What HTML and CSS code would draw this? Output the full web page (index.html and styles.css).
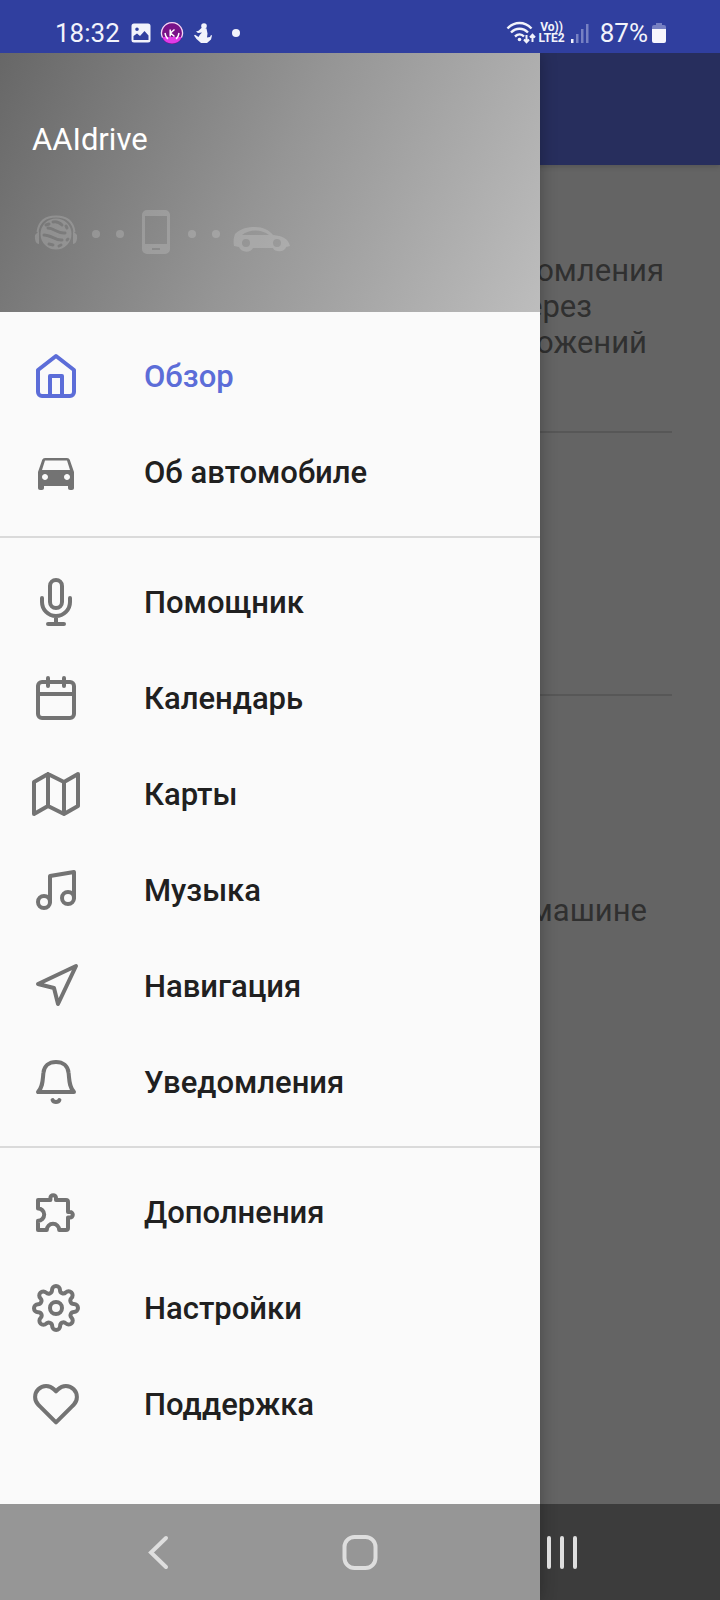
FILE: index.html
```html
<!DOCTYPE html>
<html lang="ru">
<head>
<meta charset="utf-8">
<meta name="viewport" content="width=device-width, initial-scale=1">
<title>AAIdrive</title>
<link rel="stylesheet" href="styles.css">
</head>
<body>
<div class="screen">
  <header class="status">
    <div class="status-group status-left">
      <span class="status-text clock">18:32</span>
      <svg width="20" height="20" viewBox="0 0 20 20"><path fill="#f2f3fb" fill-rule="evenodd" d="M3 .5h14A2.500 2.500 0 0 1 19.500 3v14a2.500 2.500 0 0 1-2.500 2.500H3A2.500 2.500 0 0 1 .5 17V3A2.500 2.500 0 0 1 3 .5zM2.500 13v4h15v-4.500L13.500 8l-4.500 5-3-2.500zM6 4.500a1.800 1.800 0 1 0 0 3.600 1.800 1.800 0 0 0 0-3.600z"/></svg>
      <svg width="24" height="24" viewBox="0 0 24 24"><circle cx="12" cy="12" r="11" fill="#7a1288"/><path d="M2 16h20a11 11 0 0 1-20 0z" fill="#e03be8"/><path d="M2.500 16.500a10.500 10.500 0 1 1 19 0" fill="none" stroke="#f3d9f7" stroke-width="1.300"/><path d="M5 12l.8 3 2 3M19 12l-.8 3-2 3M10.200 8.500v7M14.500 8.500l-4 3.500 4 3.500" fill="none" stroke="#fff" stroke-width="1.500"/></svg>
      <svg width="20" height="22" viewBox="0 0 20 22"><g fill="#f2f3fb"><circle cx="11" cy="4" r="2.800"/><path d="M9 5.500l4.500 1 1 5-.5 4 3-.5 1-2 1 .5-1 4-4 3.500H8L3.500 17 1 13.500l1-.8L5.500 15 7 12.500l2-2-4 .5-2-1.500 2.500-.7z"/></g></svg>
      <svg class="status-dot" width="8" height="8" viewBox="0 0 8 8"><circle cx="4" cy="4" r="4" fill="#f2f3fb"/></svg>
    </div>
    <div class="status-group status-right">
      <svg width="30" height="24" viewBox="0 0 30 24" fill="none" stroke="#f2f3fb" stroke-width="2.400"><path d="M1.500 7.500c7-7.300 17-7.300 24 0M5 11.500c5-5 12-5 17 0M9 15.500c3-2.800 6.500-2.800 9 0"/><circle cx="13.500" cy="18.500" r="1.800" fill="#f2f3fb" stroke="none"/><path stroke-width="2" d="M20.500 14v7M18 18.500l2.500 2.800 2.500-2.800M26.500 21v-7M24 16.500l2.500-2.800 2.500 2.800"/></svg>
      <span class="lte"><span>Vo))</span><span>LTE2</span></span>
      <svg width="20" height="22" viewBox="0 0 20 22"><path d="M1 17h2.500v4H1z" fill="#f2f3fb"/><path d="M6 12h2.500v9H6zM11 7h2.500v14H11zM16 2h2.500v19H16z" fill="#7781c3"/></svg>
      <span class="status-text battery-text">87%</span>
      <svg width="14" height="22" viewBox="0 0 14 22"><path d="M4 3V1h6v2h2a2 2 0 0 1 2 2v3H0V5a2 2 0 0 1 2-2z" fill="#7781c3"/><path d="M0 7h14v12a2 2 0 0 1-2 2H2a2 2 0 0 1-2-2z" fill="#f6f6fd"/></svg>
    </div>
  </header>

  <div class="stage">
    <main class="page">
      <div class="toolbar"></div>
      <div class="content">
        <p class="copy copy-first"><span class="line">уведомления</span><span class="line line-short">через</span><span class="line line-mid">приложений</span></p>
        <p class="copy copy-blank"></p>
        <p class="copy copy-last"><span class="line line-mid">машине</span></p>
      </div>
    </main>

    <aside class="drawer">
      <div class="drawer-head">
        <h1 class="drawer-title">AAIdrive</h1>
        <div class="chain">
          <svg width="52" height="48" viewBox="0 0 52 48"><mask id="globe-cut"><rect width="52" height="48" fill="#fff"/><g fill="none" stroke="#000" stroke-width="3" stroke-linecap="round"><path d="M21 12c4-1 7 1 9 3M14 15l3-1M16 18c6 0 10 6 17 5M12 25c7 0 12 6 18 5M17 34l4 1M34 16l1 2M35 30l1-1M27 36l2-1"/></g></mask><circle cx="24" cy="24" r="15.500" mask="url(#globe-cut)"/><path class="chain-line" d="M5.500 22C7 11 14 6.500 24 6.500S41 11 42.500 22"/><path d="M3 25l4-4v13c-3 0-4.500-4-4-9zM45 25l-4-4v13c3 0 4.500-4 4-9z"/></svg>
          <svg width="48" height="48" viewBox="0 0 48 48"><circle cx="12" cy="24" r="4"/><circle cx="36" cy="24" r="4"/></svg>
          <svg width="48" height="48" viewBox="0 0 48 48"><path fill-rule="evenodd" d="M15 0h18a5 5 0 0 1 5 5v34a5 5 0 0 1-5 5H15a5 5 0 0 1-5-5V5a5 5 0 0 1 5-5zM13 6v28h22V6zM20 38v2h8v-2z"/></svg>
          <svg width="48" height="48" viewBox="0 0 48 48"><circle cx="12" cy="24" r="4"/><circle cx="36" cy="24" r="4"/></svg>
          <svg width="64" height="48" viewBox="0 0 64 48"><path fill-rule="evenodd" d="M7 24C13 18 20 17 27 17c8 0 14 3 18 8 9 1 15 3 17 11l-4 1c-1 5-11 6-13 1H25c-2 5-12 5-14-1l-5-1c-1-5 0-9 1-12zM14 25h27c-7-6-20-6-27 0zM18 29a4 4 0 1 0 0 8 4 4 0 0 0 0-8zM49 29a4 4 0 1 0 0 8 4 4 0 0 0 0-8z"/></svg>
        </div>
      </div>
      <nav>
        <ul class="menu">
          <li><a class="item item-active" href="#overview"><svg class="icon" viewBox="0 0 24 24"><path d="M3 9l9-7 9 7v11a2 2 0 0 1-2 2H5a2 2 0 0 1-2-2zM9 22V12h6v10"/></svg>Обзор</a></li>
          <li><a class="item" href="#car"><svg class="icon icon-solid" viewBox="0 0 24 24"><path d="M18.920 6.010C18.720 5.420 18.160 5 17.500 5h-11c-.66 0-1.210.42-1.420 1.010L3 12v8c0 .55.45 1 1 1h1c.55 0 1-.45 1-1v-1h12v1c0 .55.45 1 1 1h1c.55 0 1-.45 1-1v-8l-2.080-5.990zM6.500 16c-.83 0-1.500-.67-1.500-1.500S5.670 13 6.500 13s1.500.67 1.500 1.500S7.330 16 6.500 16zm11 0c-.83 0-1.500-.67-1.500-1.500s.67-1.500 1.500-1.500 1.500.67 1.500 1.500-.67 1.500-1.500 1.500zM5 11l1.500-4.800h11L19 11H5z"/></svg>Об автомобиле</a></li>
        </ul>
        <ul class="menu">
          <li><a class="item" href="#assistant"><svg class="icon" viewBox="0 0 24 24"><path d="M12 1a3 3 0 0 0-3 3v8a3 3 0 0 0 6 0V4a3 3 0 0 0-3-3zM19 10v2a7 7 0 0 1-14 0v-2M12 19v4M8 23h8"/></svg>Помощник</a></li>
          <li><a class="item" href="#calendar"><svg class="icon" viewBox="0 0 24 24"><rect x="3" y="4" width="18" height="18" rx="2"/><path d="M16 2v4M8 2v4M3 10h18"/></svg>Календарь</a></li>
          <li><a class="item" href="#maps"><svg class="icon" viewBox="0 0 24 24"><path d="M1 6v16l7-4 8 4 7-4V2l-7 4-8-4zM8 2v16M16 6v16"/></svg>Карты</a></li>
          <li><a class="item" href="#music"><svg class="icon" viewBox="0 0 24 24"><path d="M9 18V5l12-2v13"/><circle cx="6" cy="18" r="3"/><circle cx="18" cy="16" r="3"/></svg>Музыка</a></li>
          <li><a class="item" href="#navigation"><svg class="icon" viewBox="0 0 24 24"><path d="M3 11l19-9-9 19-2-8z"/></svg>Навигация</a></li>
          <li><a class="item" href="#notifications"><svg class="icon" viewBox="0 0 24 24"><path d="M3 17h18c-2.500-2.500-2.300-6-2.700-9.500C18 4 15.500 2 12 2S6 4 5.700 7.500C5.300 11 5.500 14.500 3 17zM10.300 21a1.800 1.500 0 0 0 3.400 0"/></svg>Уведомления</a></li>
        </ul>
        <ul class="menu">
          <li><a class="item" href="#addons"><svg class="icon" viewBox="0 0 24 24"><path d="M3 6h6.200V5a1.400 1.400 0 0 1 2.800 0v1H17a1 1 0 0 1 1 1v5h1a1.400 1.400 0 0 1 0 2.800h-1V20a1 1 0 0 1-1 1h-3.400a3.100 3.100 0 0 0-6.200 0H3v-4.600a3.100 3.100 0 0 0 0-6.200z"/></svg>Дополнения</a></li>
          <li><a class="item" href="#settings"><svg class="icon" viewBox="0 0 24 24"><circle cx="12" cy="12" r="3"/><path d="M19.400 15a1.650 1.650 0 0 0 .33 1.820l.06.06a2 2 0 0 1 0 2.830 2 2 0 0 1-2.830 0l-.06-.06a1.650 1.650 0 0 0-1.820-.33 1.650 1.650 0 0 0-1 1.510V21a2 2 0 0 1-2 2 2 2 0 0 1-2-2v-.09A1.650 1.650 0 0 0 9 19.400a1.650 1.650 0 0 0-1.820.33l-.06.06a2 2 0 0 1-2.830 0 2 2 0 0 1 0-2.830l.06-.06a1.650 1.650 0 0 0 .33-1.820 1.650 1.650 0 0 0-1.510-1H3a2 2 0 0 1-2-2 2 2 0 0 1 2-2h.09A1.650 1.650 0 0 0 4.600 9a1.650 1.650 0 0 0-.33-1.820l-.06-.06a2 2 0 0 1 0-2.830 2 2 0 0 1 2.830 0l.06.06a1.650 1.650 0 0 0 1.820.33H9a1.650 1.650 0 0 0 1-1.510V3a2 2 0 0 1 2-2 2 2 0 0 1 2 2v.09a1.650 1.650 0 0 0 1 1.510 1.650 1.650 0 0 0 1.820-.33l.06-.06a2 2 0 0 1 2.830 0 2 2 0 0 1 0 2.830l-.06.06a1.650 1.650 0 0 0-.33 1.820V9a1.650 1.650 0 0 0 1.510 1H21a2 2 0 0 1 2 2 2 2 0 0 1-2 2h-.09a1.650 1.650 0 0 0-1.510 1z"/></svg>Настройки</a></li>
          <li><a class="item" href="#support"><svg class="icon" viewBox="0 0 24 24"><path d="M20.840 4.610a5.500 5.500 0 0 0-7.780 0L12 5.670l-1.060-1.060a5.500 5.500 0 0 0-7.780 7.780l1.060 1.060L12 21.230l7.780-7.780 1.060-1.060a5.500 5.500 0 0 0 0-7.780z"/></svg>Поддержка</a></li>
        </ul>
      </nav>
    </aside>
  </div>

  <footer class="sysnav">
    <button class="sysbtn" type="button" aria-label="Назад"><svg width="40" height="40" viewBox="0 0 40 40"><path d="M28 6L13 20.500 28 35"/></svg></button>
    <button class="sysbtn" type="button" aria-label="Домой"><svg width="40" height="40" viewBox="0 0 40 40"><rect x="4.500" y="5" width="31" height="31" rx="10"/></svg></button>
    <button class="sysbtn" type="button" aria-label="Недавние"><svg width="40" height="40" viewBox="0 0 40 40"><path d="M7 6v29M20 6v29M33 6v29"/></svg></button>
  </footer>
</div>
</body>
</html>
```
FILE: styles.css
```css
* {
  box-sizing: border-box;
}

body {
  margin: 0;
  background: #646464;
  font-family: Roboto, "Noto Sans", sans-serif;
}

svg {
  display: block;
  flex: none;
}

.screen {
  position: relative;
  display: flex;
  flex-direction: column;
  min-height: 100vh;
}

.status {
  display: flex;
  justify-content: space-between;
  height: 53px;
  padding: 13px 54px 0 55px;
  background: #303f9f;
  color: #f2f3fb;
}

.status-group {
  display: flex;
  align-items: center;
  height: 40px;
}

.status-left {
  gap: 9px;
}

.status-right {
  gap: 2px;
}

.status-text {
  font-size: 26px;
  line-height: 32px;
}

.clock {
  margin-right: 2px;
}

.status-dot {
  margin-left: 10px;
}

.lte {
  display: flex;
  flex-direction: column;
  align-items: center;
  margin-right: 3px;
  font-size: 12px;
  font-weight: 700;
  line-height: 11px;
}

.battery-text {
  margin: 0 2px 0 8px;
}

.stage {
  position: relative;
  flex: 1;
  display: flex;
  overflow: hidden;
}

.page {
  flex: 1;
  background: #646464;
}

.toolbar {
  height: 112px;
  background: #272e5d;
  box-shadow: 0 2px 5px rgba(0, 0, 0, 0.15);
}

.content {
  padding: 88px 48px 0;
}

.copy {
  display: flex;
  flex-direction: column;
  align-items: flex-end;
  margin: 0;
  color: #303030;
  font-size: 31px;
  line-height: 36px;
}

.copy-first {
  height: 180px;
  border-bottom: 2px solid #575757;
}

.copy-blank {
  height: 263px;
  border-bottom: 2px solid #575757;
}

.copy-last {
  padding-top: 197px;
}

.line {
  margin-right: 8px;
}

.line-mid {
  margin-right: 25px;
}

.line-short {
  margin-right: 80px;
}

.drawer {
  position: absolute;
  top: 0;
  bottom: 0;
  left: 0;
  width: 75%;
  padding-bottom: 140px;
  background: #fafafa;
  box-shadow: 0 0 16px rgba(0, 0, 0, 0.3);
}

.drawer-head {
  height: 259px;
  padding: 69px 32px 0;
  background: linear-gradient(116deg, #676767, #959595 50%, #bdbdbd);
}

.drawer-title {
  margin: 0;
  color: #fff;
  font-size: 31px;
  font-weight: 400;
  line-height: 36px;
}

.chain {
  display: flex;
  margin-top: 52px;
  fill: #fff;
  opacity: 0.17;
}

.chain-line {
  fill: none;
  stroke: #fff;
  stroke-width: 2px;
}

.menu {
  margin: 0;
  padding: 16px 0;
  list-style: none;
}

.menu + .menu {
  border-top: 2px solid #dadada;
}

.item {
  display: flex;
  align-items: center;
  gap: 64px;
  height: 96px;
  padding: 0 32px;
  color: #202020;
  font-size: 31px;
  font-weight: 500;
  text-decoration: none;
}

.item-active {
  color: #5c6dd8;
}

.icon {
  width: 48px;
  height: 48px;
  fill: none;
  stroke: #737373;
  stroke-width: 2px;
  stroke-linecap: round;
  stroke-linejoin: round;
}

.icon-solid {
  fill: #737373;
  stroke: none;
}

.item-active .icon {
  stroke: #5c6dd8;
}

.sysnav {
  position: absolute;
  right: 0;
  bottom: 0;
  left: 0;
  display: flex;
  justify-content: center;
  gap: 162px;
  height: 96px;
  background: rgba(0, 0, 0, 0.4);
}

.sysbtn {
  display: flex;
  align-items: center;
  padding: 0;
  border: 0;
  background: none;
  fill: none;
  stroke: #dedede;
  stroke-width: 4px;
  stroke-linecap: round;
}
```
